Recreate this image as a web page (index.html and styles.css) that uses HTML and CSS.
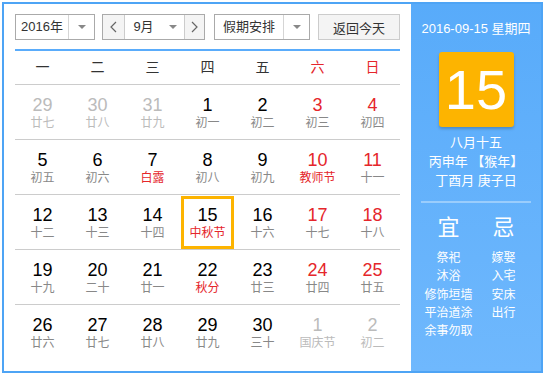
FILE: index.html
```html
<!DOCTYPE html>
<html lang="zh-CN">
<head>
        <meta charset="UTF-8" />
        <title>万年历</title>
        <link rel="stylesheet" href="styles.css">
</head>
<body>

<div class="calendar">
        <div class="main">
                <div class="toolbar">
                        <div class="select year-select">
                                <span class="select-text">2016年</span>
                                <span class="select-arrow"></span>
                        </div>
                        <div class="month-group">
                                <span class="nav-btn prev">
                                        <svg width="7" height="12" viewBox="0 0 7 12"><path d="M6 1 L1 6 L6 11" fill="none" stroke="#666" stroke-width="1.2"/></svg>
                                </span>
                                <div class="month-select">
                                        <span class="select-text">9月</span>
                                        <span class="select-arrow plain"></span>
                                </div>
                                <span class="nav-btn next">
                                        <svg width="7" height="12" viewBox="0 0 7 12"><path d="M1 1 L6 6 L1 11" fill="none" stroke="#666" stroke-width="1.2"/></svg>
                                </span>
                        </div>
                        <div class="select holiday-select">
                                <span class="select-text">假期安排</span>
                                <span class="select-arrow"></span>
                        </div>
                        <button class="today-btn">返回今天</button>
                </div>

                <div class="week-head">
                        <span>一</span><span>二</span><span>三</span><span>四</span><span>五</span>
                        <span class="red">六</span><span class="red">日</span>
                </div>

                <div class="days">
                        <div class="day other"><div class="day-box"><div class="num">29</div><div class="lunar">廿七</div></div></div>
                        <div class="day other"><div class="day-box"><div class="num">30</div><div class="lunar">廿八</div></div></div>
                        <div class="day other"><div class="day-box"><div class="num">31</div><div class="lunar">廿九</div></div></div>
                        <div class="day"><div class="day-box"><div class="num">1</div><div class="lunar">初一</div></div></div>
                        <div class="day"><div class="day-box"><div class="num">2</div><div class="lunar">初二</div></div></div>
                        <div class="day weekend"><div class="day-box"><div class="num">3</div><div class="lunar">初三</div></div></div>
                        <div class="day weekend"><div class="day-box"><div class="num">4</div><div class="lunar">初四</div></div></div>

                        <div class="day"><div class="day-box"><div class="num">5</div><div class="lunar">初五</div></div></div>
                        <div class="day"><div class="day-box"><div class="num">6</div><div class="lunar">初六</div></div></div>
                        <div class="day"><div class="day-box"><div class="num">7</div><div class="lunar festival">白露</div></div></div>
                        <div class="day"><div class="day-box"><div class="num">8</div><div class="lunar">初八</div></div></div>
                        <div class="day"><div class="day-box"><div class="num">9</div><div class="lunar">初九</div></div></div>
                        <div class="day weekend"><div class="day-box"><div class="num">10</div><div class="lunar festival">教师节</div></div></div>
                        <div class="day weekend"><div class="day-box"><div class="num">11</div><div class="lunar">十一</div></div></div>

                        <div class="day"><div class="day-box"><div class="num">12</div><div class="lunar">十二</div></div></div>
                        <div class="day"><div class="day-box"><div class="num">13</div><div class="lunar">十三</div></div></div>
                        <div class="day"><div class="day-box"><div class="num">14</div><div class="lunar">十四</div></div></div>
                        <div class="day today"><div class="day-box"><div class="num">15</div><div class="lunar festival">中秋节</div></div></div>
                        <div class="day"><div class="day-box"><div class="num">16</div><div class="lunar">十六</div></div></div>
                        <div class="day weekend"><div class="day-box"><div class="num">17</div><div class="lunar">十七</div></div></div>
                        <div class="day weekend"><div class="day-box"><div class="num">18</div><div class="lunar">十八</div></div></div>

                        <div class="day"><div class="day-box"><div class="num">19</div><div class="lunar">十九</div></div></div>
                        <div class="day"><div class="day-box"><div class="num">20</div><div class="lunar">二十</div></div></div>
                        <div class="day"><div class="day-box"><div class="num">21</div><div class="lunar">廿一</div></div></div>
                        <div class="day"><div class="day-box"><div class="num">22</div><div class="lunar festival">秋分</div></div></div>
                        <div class="day"><div class="day-box"><div class="num">23</div><div class="lunar">廿三</div></div></div>
                        <div class="day weekend"><div class="day-box"><div class="num">24</div><div class="lunar">廿四</div></div></div>
                        <div class="day weekend"><div class="day-box"><div class="num">25</div><div class="lunar">廿五</div></div></div>

                        <div class="day"><div class="day-box"><div class="num">26</div><div class="lunar">廿六</div></div></div>
                        <div class="day"><div class="day-box"><div class="num">27</div><div class="lunar">廿七</div></div></div>
                        <div class="day"><div class="day-box"><div class="num">28</div><div class="lunar">廿八</div></div></div>
                        <div class="day"><div class="day-box"><div class="num">29</div><div class="lunar">廿九</div></div></div>
                        <div class="day"><div class="day-box"><div class="num">30</div><div class="lunar">三十</div></div></div>
                        <div class="day other"><div class="day-box"><div class="num">1</div><div class="lunar">国庆节</div></div></div>
                        <div class="day other"><div class="day-box"><div class="num">2</div><div class="lunar">初二</div></div></div>
                </div>
        </div>

        <div class="side">
                <div class="side-date">2016-09-15 星期四</div>
                <div class="big-day">15</div>
                <div class="lunar-info">
                        <div>八月十五</div>
                        <div>丙申年 【猴年】</div>
                        <div>丁酉月 庚子日</div>
                </div>
                <div class="divider"></div>
                <div class="yiji">
                        <div class="yiji-col">
                                <div class="yiji-title">宜</div>
                                <ul class="yiji-list">
                                        <li>祭祀</li>
                                        <li>沐浴</li>
                                        <li>修饰垣墙</li>
                                        <li>平治道涂</li>
                                        <li>余事勿取</li>
                                </ul>
                        </div>
                        <div class="yiji-col">
                                <div class="yiji-title">忌</div>
                                <ul class="yiji-list">
                                        <li>嫁娶</li>
                                        <li>入宅</li>
                                        <li>安床</li>
                                        <li>出行</li>
                                </ul>
                        </div>
                </div>
        </div>
</div>

</body>
</html>
```

FILE: styles.css
```css
body {
        margin: 0;
        font-family: "Liberation Sans", "Noto Sans CJK SC", sans-serif;
        color: #333;
        background: #fff;
}

.calendar {
        margin: 2px;
        width: 541px;
        height: 371px;
        box-sizing: border-box;
        border: 2px solid #4ea4f5;
        display: flex;
        background: #fff;
}

.main {
        width: 407px;
        padding: 10px 11px 0;
        box-sizing: border-box;
}

/* toolbar */

.toolbar {
        display: flex;
        height: 26px;
        font-size: 13px;
}

.select,
.month-group {
        display: flex;
        height: 26px;
        box-sizing: border-box;
        border: 1px solid #aaa;
        background: #fff;
}

.select-text {
        flex: 1;
        display: flex;
        align-items: center;
        justify-content: center;
        line-height: 24px;
}

.select-arrow {
        width: 25px;
        border-left: 1px solid #d5d5d5;
        display: flex;
        align-items: center;
        justify-content: center;
}

.select-arrow::before {
        content: "";
        border-left: 4px solid transparent;
        border-right: 4px solid transparent;
        border-top: 4px solid #888;
}

.select-arrow.plain {
        border-left: none;
        width: 22px;
}

.year-select {
        width: 80px;
        margin-right: 7px;
}

.month-group {
        width: 103px;
        margin-right: 9px;
}

.nav-btn {
        width: 21px;
        background: #f4f4f4;
        display: flex;
        align-items: center;
        justify-content: center;
}

.nav-btn.prev {
        border-right: 1px solid #ccc;
}

.nav-btn.next {
        width: 19px;
        border-left: 1px solid #ccc;
}

.month-select {
        flex: 1;
        display: flex;
}

.holiday-select {
        width: 96px;
        margin-right: 8px;
}

.today-btn {
        width: 82px;
        height: 26px;
        padding: 0;
        border: 1px solid #ccc;
        background: #f4f4f4;
        font-family: inherit;
        font-size: 13px;
        color: #333;
}

/* grid */

.week-head {
        margin-top: 9px;
        display: grid;
        grid-template-columns: repeat(7, 55px);
        height: 33px;
        line-height: 33px;
        text-align: center;
        font-size: 14px;
        border-top: 2px solid #5aacfb;
        border-bottom: 1px solid #ccc;
}

.red {
        color: #e5262b;
}

.days {
        display: grid;
        grid-template-columns: repeat(7, 55px);
}

.day {
        height: 55px;
        box-sizing: border-box;
        padding: 1px 1px 0 1px;
        border-bottom: 1px solid #ccc;
        text-align: center;
}

.day:nth-last-child(-n+7) {
        border-bottom: none;
}

.day-box {
        height: 53px;
        box-sizing: border-box;
        padding-top: 9px;
}

.num {
        font-size: 18px;
        line-height: 20px;
        color: #000;
}

.lunar {
        font-size: 12px;
        line-height: 16px;
        color: #888;
}

.lunar.festival,
.weekend .num {
        color: #e5262b;
}

.other .num,
.other .lunar {
        color: #bbb;
}

.today .day-box {
        border: 3px solid #fdb400;
        padding-top: 6px;
}

/* side panel */

.side {
        flex: 1;
        background: linear-gradient(#58abfa, #6fb8fd);
        color: #fff;
        text-align: center;
}

.side-date {
        padding-top: 15px;
        font-size: 13px;
        line-height: 20px;
}

.big-day {
        width: 75px;
        height: 75px;
        margin: 13px auto 0;
        background: #fdb400;
        border-radius: 3px;
        box-shadow: 0 2px 3px rgba(0, 0, 0, 0.2);
        font-size: 56px;
        line-height: 75px;
}

.lunar-info {
        margin-top: 6px;
        font-size: 13px;
        line-height: 19px;
}

.divider {
        width: 110px;
        height: 2px;
        margin: 11px auto 0;
        background: rgba(255, 255, 255, 0.35);
}

.yiji {
        display: flex;
        justify-content: center;
        margin-top: 12px;
}

.yiji-col {
        width: 55px;
}

.yiji-title {
        font-size: 22px;
        line-height: 26px;
}

.yiji-list {
        list-style: none;
        margin: 8px 0 0;
        padding: 0;
        font-size: 12px;
        line-height: 18.3px;
        white-space: nowrap;
}
```
